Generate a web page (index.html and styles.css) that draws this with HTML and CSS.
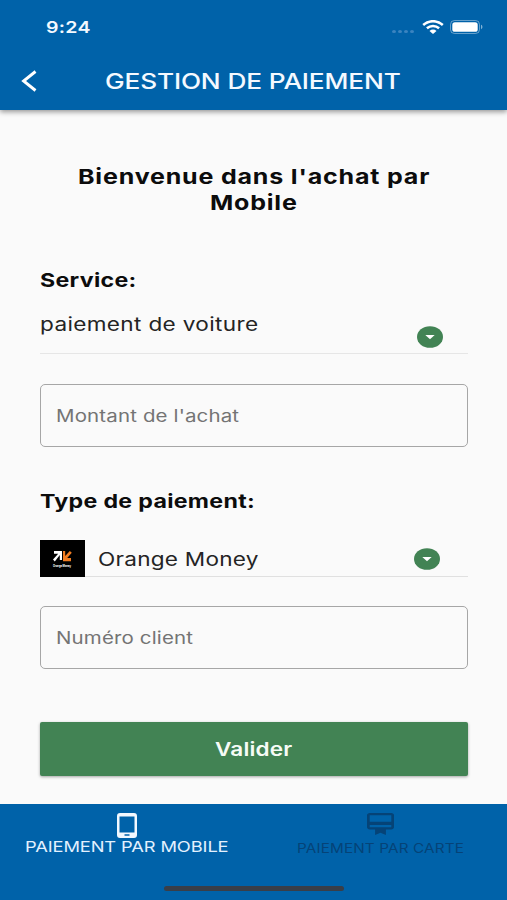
FILE: index.html
```
<!DOCTYPE html>
<html lang="fr">
  <head>
    <meta charset="UTF-8" />
    <meta name="viewport" content="width=device-width, initial-scale=1.0" />
    <title>Gestion de paiement</title>
    <link rel="stylesheet" href="styles.css">
  </head>
  <body>
    <header class="header">
      <div class="status">
        <span class="wide time">9:24</span>
        <div class="status-icons">
          <div class="dots"><i></i><i></i><i></i><i></i></div>
          <svg class="wifi" viewBox="0 0 22 14" preserveAspectRatio="none">
            <path d="M1.2 5C6.8-.1 15.2-.1 20.8 5M4.9 8.3c3.5-3.1 8.7-3.1 12.2 0" fill="none" stroke="#fff" stroke-width="2.5" />
            <path d="M7.5 10.9c2-1.8 5-1.8 7 0l-3.5 3z" fill="#fff" />
          </svg>
          <svg class="battery" viewBox="0 0 33 14">
            <rect x=".5" y=".5" width="29" height="13" rx="4" fill="none" stroke="#fff" stroke-opacity=".4" />
            <rect x="2.3" y="2.2" width="25.4" height="9.6" rx="2.6" fill="#fff" />
            <path d="M31 4.8c1.9.6 1.9 3.8 0 4.4z" fill="#fff" fill-opacity=".5" />
          </svg>
        </div>
      </div>
      <div class="appbar">
        <svg class="back" viewBox="0 0 16 22"><path d="M14.5 1.5L2.6 11l11.9 9.5" fill="none" stroke="#fff" stroke-width="2.9" /></svg>
        <h1 class="wide title">GESTION DE PAIEMENT</h1>
      </div>
    </header>

    <main class="content">
      <h2 class="welcome">
        <span class="wide line1">Bienvenue dans l'achat par</span>
        <span class="wide line2">Mobile</span>
      </h2>

      <h3 class="label"><span class="wide">Service:</span></h3>
      <div class="select select-service">
        <span class="wide value">paiement de voiture</span>
        <svg class="arrow" viewBox="0 0 26 22"><ellipse cx="13" cy="11" rx="13" ry="10.8" fill="#428354" /><path d="M8.3 9h9.4L13 13.2z" fill="#fff" /></svg>
      </div>
      <div class="field"><span class="wide">Montant de l'achat</span></div>

      <h3 class="label label-type"><span class="wide">Type de paiement:</span></h3>
      <div class="select select-type">
        <svg class="logo" viewBox="0 0 45 37">
          <rect width="45" height="37" fill="#000" />
          <path d="M14 11h8v9h-2.2v-5l-5 6.5-1.8-2 5.2-5.7H14z" fill="#fff" />
          <path d="M23 11h2.2v5l4.6-5 2 1.7-4.6 5.3H31v3.2h-8z" fill="#f07c22" />
          <text x="13" y="26.5" class="logo-text" textLength="18" lengthAdjust="spacingAndGlyphs">Orange Money</text>
        </svg>
        <div class="select-value">
          <span class="wide value orange">Orange Money</span>
          <svg class="arrow" viewBox="0 0 26 22"><ellipse cx="13" cy="11" rx="13" ry="10.8" fill="#428354" /><path d="M8.3 9h9.4L13 13.2z" fill="#fff" /></svg>
        </div>
      </div>
      <div class="field field-client"><span class="wide">Numéro client</span></div>

      <button class="submit"><span class="wide">Valider</span></button>
    </main>

    <nav class="tabs">
      <div class="tab">
        <svg class="icon-mobile" viewBox="0 0 20 25"><path fill-rule="evenodd" d="M3 0h14a3 3 0 0 1 3 3v19a3 3 0 0 1-3 3H3a3 3 0 0 1-3-3V3a3 3 0 0 1 3-3zM2.5 3.5v16h15v-16zM7.5 21.3v1.4h5v-1.4z" fill="#f2f8ff" /></svg>
        <span class="wide mobile">PAIEMENT PAR MOBILE</span>
      </div>
      <div class="tab">
        <svg class="icon-carte" viewBox="0 0 20 20" preserveAspectRatio="none"><path d="M18 0H2C.9 0 0 .9 0 2v11c0 1.1.9 2 2 2h4v5l4-2 4 2v-5h4c1.1 0 2-.9 2-2V2c0-1.1-.9-2-2-2zm0 13H2v-2h16v2zm0-5H2V2h16v6z" fill="#054377" /></svg>
        <span class="wide carte">PAIEMENT PAR CARTE</span>
      </div>
      <div class="home"></div>
    </nav>
  </body>
</html>
```
FILE: styles.css
```
* {
  box-sizing: border-box;
}
body {
  margin: 0;
  height: 900px;
  display: flex;
  flex-direction: column;
  background: #fafafa;
  color: #0c0c0c;
  font-family: Inter, "Liberation Sans", sans-serif;
  overflow: hidden;
}
h1,
h2,
h3 {
  margin: 0;
}
svg {
  display: block;
  flex: none;
}
/* extended letterforms */
.wide {
  display: inline-block;
  white-space: nowrap;
  letter-spacing: 0.12px;
  transform: scaleX(1.22);
  transform-origin: left center;
}

.header {
  height: 110px;
  background: #0062a9;
  color: #f4f9ff;
  box-shadow: 0 2px 5px rgba(0, 0, 0, 0.4);
}
.status {
  height: 54px;
  padding: 0 24px 0 46px;
  display: flex;
  align-items: center;
  justify-content: space-between;
}
.time {
  font-size: 16px;
  font-weight: 600;
  letter-spacing: 0.25px;
}
.status-icons {
  display: flex;
  align-items: center;
}
.dots {
  display: flex;
  gap: 2px;
  padding-top: 9px;
  margin-right: 8px;
}
.dots i {
  width: 4px;
  height: 3px;
  border-radius: 50%;
  background: #3b84c0;
}
.wifi {
  width: 22px;
  height: 14px;
  margin-right: 6px;
}
.battery {
  width: 33px;
  height: 14px;
}
.appbar {
  height: 54px;
  padding-left: 21px;
  display: flex;
  align-items: center;
}
.back {
  width: 16px;
  height: 22px;
  margin-right: 68px;
}
.title {
  font-size: 21.5px;
  font-weight: 500;
  letter-spacing: -0.12px;
}

.content {
  flex: 1;
  padding: 54px 39px 0 40px;
}
.welcome {
  display: flex;
  flex-direction: column;
  align-items: flex-start;
  font-size: 20.5px;
  line-height: 26px;
}
.line1 {
  margin-left: 38px;
  letter-spacing: 0.67px;
}
.line2 {
  margin-left: 170px;
  letter-spacing: 0.65px;
}
.label {
  margin-top: 53px;
  font-size: 19px;
  line-height: 24px;
}
.label .wide {
  letter-spacing: 0.25px;
}
.label-type {
  margin-top: 43px;
}
.select {
  display: flex;
  font-size: 18.5px;
  color: #242424;
}
.select-service {
  height: 61px;
  padding: 19px 25px 0 0;
  line-height: 24px;
  justify-content: space-between;
  border-bottom: 1px solid #e6e6e6;
}
.value {
  letter-spacing: 0.28px;
}
.arrow {
  width: 26px;
  height: 22px;
}
.select-service .arrow {
  margin-top: 14px;
}
.field {
  height: 63px;
  margin-top: 30px;
  padding-left: 15px;
  display: flex;
  align-items: center;
  border: 1.5px solid #a6a6a6;
  border-radius: 5px;
  font-size: 16.8px;
  color: #747474;
}
.field-client {
  margin-top: 29px;
}
.select-type {
  margin-top: 26px;
  height: 37px;
}
.logo {
  width: 45px;
  height: 37px;
}
.logo-text {
  font-size: 3.5px;
  font-weight: 700;
  fill: #fff;
}
.select-value {
  flex: 1;
  display: flex;
  align-items: center;
  justify-content: space-between;
  padding: 1px 28px 0 13px;
  border-bottom: 1px solid #e0e0e0;
}
.orange {
  padding-top: 1px;
  letter-spacing: 0.2px;
}
.submit {
  display: block;
  width: 100%;
  height: 54px;
  margin-top: 53px;
  padding: 0 0 0 175px;
  border: 0;
  border-radius: 2px;
  background: #428354;
  box-shadow: 0 1px 3px rgba(0, 0, 0, 0.35);
  color: #f6fbf6;
  font: 600 18.5px Inter, "Liberation Sans", sans-serif;
  text-align: left;
}

.tabs {
  height: 96px;
  position: relative;
  display: grid;
  grid-template-columns: 1fr 1fr;
  background: #0062a9;
}
.tab {
  padding-top: 9px;
  display: flex;
  flex-direction: column;
  align-items: flex-start;
}
.icon-mobile {
  width: 20px;
  height: 25px;
  margin-left: 117px;
}
.mobile {
  margin-left: 25px;
  color: #e3f1ff;
  font-size: 15px;
  line-height: 18px;
  letter-spacing: -0.1px;
}
.icon-carte {
  width: 27px;
  height: 22px;
  margin-left: 113px;
}
.carte {
  margin-left: 43px;
  color: #054377;
  font-size: 12.5px;
  line-height: 27px;
}
.home {
  position: absolute;
  left: 164px;
  bottom: 9px;
  width: 180px;
  height: 5px;
  border-radius: 3px;
  background: #393e48;
}
```
